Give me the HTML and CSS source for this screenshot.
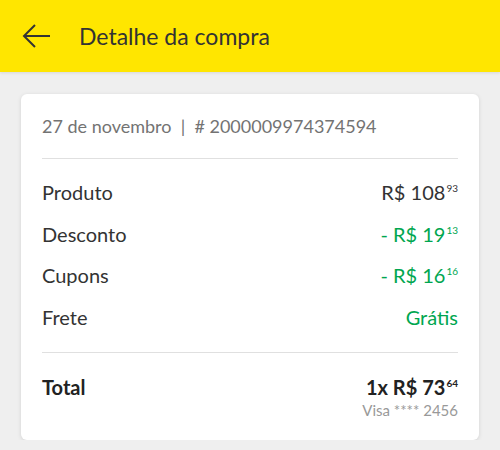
FILE: index.html
```html
<!DOCTYPE html>
<html>
<head>
    <title>Detalhe da compra</title>
    <link rel="stylesheet" href="styles.css">
</head>
<body>
    <div class="header">
        <svg class="back" width="30" height="26" viewBox="0 0 30 26">
            <path d="M29 13H3M14 2L3 13l11 11" fill="none" stroke="#333" stroke-width="2"/>
        </svg>
        <span class="header-title">Detalhe da compra</span>
    </div>

    <div class="card">
        <p class="meta">27 de novembro &nbsp;|&nbsp; # 2000009974374594</p>

        <div class="rows">
            <div class="row">
                <span>Produto</span>
                <span>R$ 108<sup>93</sup></span>
            </div>
            <div class="row">
                <span>Desconto</span>
                <span class="green">- R$ 19<sup>13</sup></span>
            </div>
            <div class="row">
                <span>Cupons</span>
                <span class="green">- R$ 16<sup>16</sup></span>
            </div>
            <div class="row">
                <span>Frete</span>
                <span class="green">Grátis</span>
            </div>
        </div>

        <div class="total">
            <span class="total-label">Total</span>
            <div class="total-value">
                <span class="amount">1x R$ 73<sup>64</sup></span>
                <span class="card-info">Visa **** 2456</span>
            </div>
        </div>
    </div>
</body>
</html>
```

FILE: styles.css
```css
body {
    font-family: Lato, "Open Sans", sans-serif;
    background-color: #efefef;
    margin: 0;
    padding: 0;
    color: #333;
}
.header {
    background-color: #ffe600;
    height: 72px;
    display: flex;
    align-items: center;
    padding-left: 21px;
    box-shadow: 0 1px 3px rgba(0,0,0,0.1);
}
.back {
    display: block;
}
.header-title {
    font-size: 23px;
    margin-left: 28px;
    color: #333;
}
.card {
    background-color: white;
    margin: 22px 21px 0;
    padding: 0 21px 21px;
    border-radius: 6px;
    box-shadow: 0 1px 4px rgba(0,0,0,0.12);
}
.meta {
    margin: 0;
    padding: 21px 0;
    font-size: 18px;
    line-height: 22px;
    color: #737373;
    border-bottom: 1px solid #e0e0e0;
}
.rows {
    padding: 13px 0;
    border-bottom: 1px solid #e0e0e0;
}
.row {
    display: flex;
    justify-content: space-between;
    font-size: 20px;
    line-height: 41.7px;
}
sup {
    font-size: 10px;
    vertical-align: 8px;
    line-height: 0;
    margin-left: 1px;
}
.green {
    color: #00a650;
}
.total {
    display: flex;
    justify-content: space-between;
    padding-top: 22px;
}
.total-label {
    font-size: 20px;
    line-height: 24px;
    font-weight: bold;
    color: #222;
}
.total-value {
    display: flex;
    flex-direction: column;
    align-items: flex-end;
}
.amount {
    font-size: 20px;
    line-height: 24px;
    font-weight: bold;
    color: #222;
}
.card-info {
    font-size: 15px;
    line-height: 18px;
    color: #999;
    margin-top: 2px;
}
```
